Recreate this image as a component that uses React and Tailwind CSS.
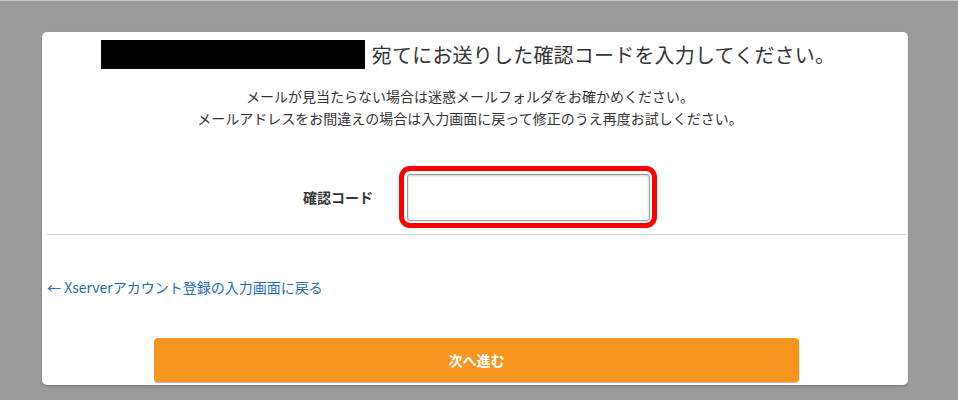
const App = () => {
  return (
    <div
      className="h-[400px] overflow-hidden bg-[#9b9b9b] border-t border-[#c6c6c6] pt-[31px] pl-[42px]"
      style={{ fontFamily: '"Noto Sans CJK JP", "Noto Sans", sans-serif' }}
    >
      {/* Card */}
      <div className="w-[866px] h-[353px] bg-white rounded-[5px] shadow-[0_1px_2px_rgba(0,0,0,0.25)] flex flex-col text-[#333]">
        {/* Title */}
        <div className="mt-[8px] h-[29px] flex justify-center items-center gap-[7px] pr-[14px]">
          <div className="w-[264px] h-[29px] bg-black" />
          <span className="text-[20px] leading-[29px] tracking-[0.2px]">宛てにお送りした確認コードを入力してください。</span>
        </div>

        {/* Notes */}
        <div className="mt-[16px] text-[14px] leading-[22px] text-center pr-[10px]">
          <p>メールが見当たらない場合は迷惑メールフォルダをお確かめください。</p>
          <p>メールアドレスをお間違えの場合は入力画面に戻って修正のうえ再度お試しください。</p>
        </div>

        {/* Form row */}
        <div className="mt-[37px] ml-[261px] flex items-center">
          <label className="w-[70px] text-[14px] font-bold leading-[20px] whitespace-nowrap">確認コード</label>
          <div className="ml-[26px] w-[258px] h-[62px] border-[5px] border-[#ff0000] rounded-[11px] pt-[3px] pl-[3px] pr-[2px] pb-[2px]">
            <input
              type="text"
              className="w-[243px] h-[47px] border border-[#999] rounded-[3px] shadow-[inset_0_1px_3px_rgba(0,0,0,0.2)] outline-none px-2"
            />
          </div>
        </div>

        <hr className="mt-[6px] ml-[5px] mr-[2px] border-0 border-t border-[#cfcfcf]" />

        {/* Back link */}
        <a href="#" className="mt-[42px] ml-[5px] text-[14px] leading-[20px] text-[#1f6db5] self-start">
          ← Xserverアカウント登録の入力画面に戻る
        </a>

        {/* Submit */}
        <button className="mt-[41px] ml-[112px] w-[645px] h-[44px] bg-[#f7951f] rounded-[4px] shadow-[0_1px_1px_rgba(0,0,0,0.3)] text-white text-[14px] font-bold">
          次へ進む
        </button>
      </div>
    </div>
  );
};

export default App;
